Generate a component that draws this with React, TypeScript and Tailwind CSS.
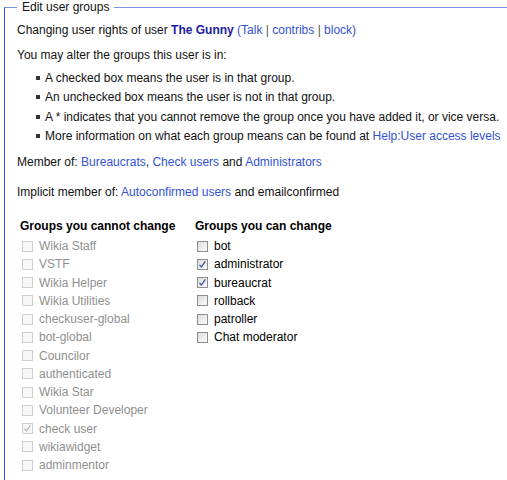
import React from "react";

const font = { fontFamily: '"Liberation Sans", Arial, sans-serif' };

function Box({ checked, disabled }: { checked?: boolean; disabled?: boolean }) {
  return (
    <span
      className={
        "relative inline-block w-[11px] h-[11px] shrink-0 border " +
        (disabled
          ? "border-[#cfcfcf] bg-[#f7f7f7]"
          : "border-[#8e8e8e] bg-gradient-to-br from-[#dcdcdc] to-[#fbfbfb]")
      }
    >
      {checked && (
        <svg viewBox="0 0 11 11" className="absolute -left-px -top-px w-[11px] h-[11px]">
          <path
            d="M2.5 5.8 L4.4 8 L8.3 2.3"
            fill="none"
            stroke={disabled ? "#b8b8b8" : "#3b4fa3"}
            strokeWidth="1.3"
          />
        </svg>
      )}
    </span>
  );
}

function Row({ label, checked, disabled }: { label: string; checked?: boolean; disabled?: boolean }) {
  return (
    <div className="flex items-center h-[18.25px] pl-[2px]">
      <Box checked={checked} disabled={disabled} />
      <span className={"ml-[6px] " + (disabled ? "text-[#8f8f8f]" : "text-black")}>{label}</span>
    </div>
  );
}

const cannot: [string, boolean?][] = [
  ["Wikia Staff"],
  ["VSTF"],
  ["Wikia Helper"],
  ["Wikia Utilities"],
  ["checkuser-global"],
  ["bot-global"],
  ["Councilor"],
  ["authenticated"],
  ["Wikia Star"],
  ["Volunteer Developer"],
  ["check user", true],
  ["wikiawidget"],
  ["adminmentor"],
];

const can: [string, boolean?][] = [
  ["bot"],
  ["administrator", true],
  ["bureaucrat", true],
  ["rollback"],
  ["patroller"],
  ["Chat moderator"],
];

const link = "text-[#3352d3]";

export default function App() {
  return (
    <div className="bg-white w-[507px] h-[480px] overflow-hidden text-[12px] text-[#111]" style={font}>
      <fieldset className="ml-[4px] border-l border-t border-l-[#3a56cf] border-t-[#7d93e2] pl-[12px] pb-4">
        <legend className="px-[5px] leading-[14px] text-[12px] text-[#111]">Edit user groups</legend>
        <div className="mt-[7px] leading-[18px]">
          Changing user rights of user <span className="font-bold text-[#1b1b9e]">The Gunny</span>{" "}
          <span className={link}>(Talk</span> <span className="text-[#555]">|</span>{" "}
          <span className={link}>contribs</span> <span className="text-[#555]">|</span>{" "}
          <span className={link}>block)</span>
        </div>
        <div className="mt-[7px] leading-[18px]">You may alter the groups this user is in:</div>
        <ul className="mt-[4px] pl-[19px]">
          {[
            <>A checked box means the user is in that group.</>,
            <>An unchecked box means the user is not in that group.</>,
            <>A * indicates that you cannot remove the group once you have added it, or vice versa.</>,
            <>
              More information on what each group means can be found at{" "}
              <span className={link}>Help:User access levels</span>
            </>,
          ].map((c, i) => (
            <li key={i} className="flex items-center h-[19.5px] whitespace-nowrap">
              <span className="inline-block w-[4px] h-[4px] bg-[#333] mr-[5px] shrink-0" />
              <span>{c}</span>
            </li>
          ))}
        </ul>
        <div className="mt-[7px] leading-[18px]">
          Member of: <span className={link}>Bureaucrats</span>, <span className={link}>Check users</span> and{" "}
          <span className={link}>Administrators</span>
        </div>
        <div className="mt-[12px] leading-[18px]">
          Implicit member of: <span className={link}>Autoconfirmed users</span> and emailconfirmed
        </div>
        <div className="mt-[16px] flex pl-[3px]">
          <div className="w-[175px]">
            <div className="font-bold text-black leading-[18px]">Groups you cannot change</div>
            <div className="mt-[2px]">
              {cannot.map(([l, c]) => (
                <Row key={l} label={l} checked={c} disabled />
              ))}
            </div>
          </div>
          <div>
            <div className="font-bold text-black leading-[18px]">Groups you can change</div>
            <div className="mt-[2px]">
              {can.map(([l, c]) => (
                <Row key={l} label={l} checked={c} />
              ))}
            </div>
          </div>
        </div>
      </fieldset>
    </div>
  );
}
